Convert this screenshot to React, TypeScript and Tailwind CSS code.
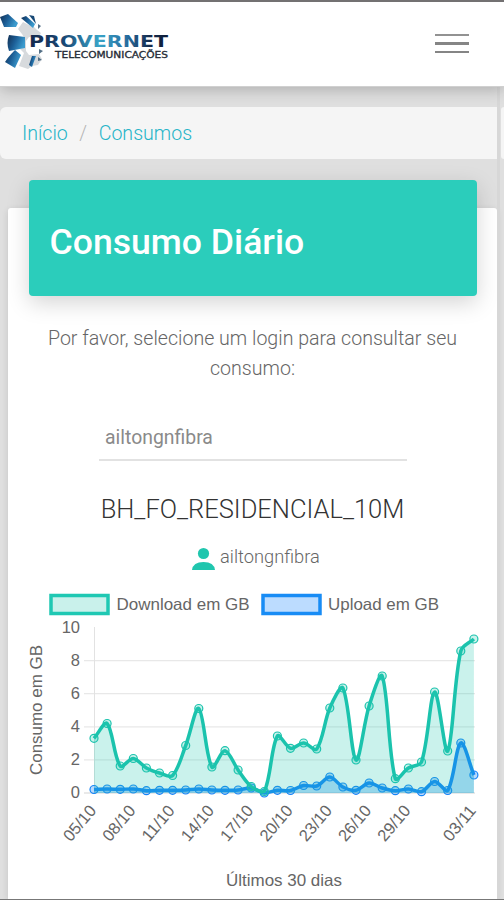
import React from "react";

const download = [738.3, 723.5, 766, 758.5, 768, 773, 775.5, 745.5, 708.5, 767, 750.7, 770, 786.5, 791.5, 736, 748.3, 743, 749, 708, 688, 760, 706, 676, 778.7, 768, 762, 692, 751, 651, 639];
const upload = [789.5, 789, 789.3, 789, 790.7, 790.3, 790.3, 790, 789, 790, 790.3, 790, 788, 793, 790.3, 790.5, 785.5, 786, 777, 787, 790.3, 783, 788, 790.7, 789, 791.7, 781.5, 790.5, 743, 775];

const CHART_TOP = 590;
const px = (i: number) => 94 + i * 13.1;

// Cardinal spline with the control points held inside the plot area.
function curve(values: number[]) {
  const p = values.map((v, i) => ({ x: px(i), y: v - CHART_TOP }));
  const clamp = (y: number) => Math.max(37, Math.min(203, y));
  const ctl = p.map((c, i) => {
    const a = p[Math.max(0, i - 1)];
    const b = p[Math.min(p.length - 1, i + 1)];
    const d1 = Math.hypot(c.x - a.x, c.y - a.y);
    const d2 = Math.hypot(b.x - c.x, b.y - c.y);
    const f1 = (0.32 * d1) / (d1 + d2);
    const f2 = (0.32 * d2) / (d1 + d2);
    return {
      px: c.x - f1 * (b.x - a.x),
      py: clamp(c.y - f1 * (b.y - a.y)),
      nx: c.x + f2 * (b.x - a.x),
      ny: clamp(c.y + f2 * (b.y - a.y)),
    };
  });
  let d = `M${p[0].x},${p[0].y}`;
  for (let i = 1; i < p.length; i++) {
    d += `C${ctl[i - 1].nx},${ctl[i - 1].ny} ${ctl[i].px},${ctl[i].py} ${p[i].x},${p[i].y}`;
  }
  return d;
}

function Series({ values, color, fill }: { values: number[]; color: string; fill: string }) {
  const d = curve(values);
  return (
    <g>
      <path d={`${d}V203H94Z`} fill={fill} />
      <path d={d} fill="none" stroke={color} strokeWidth="3.5" strokeLinejoin="round" />
      {values.map((v, i) => (
        <circle key={i} cx={px(i)} cy={v - CHART_TOP} r="4" fill={fill} stroke={color} strokeWidth="1.2" />
      ))}
    </g>
  );
}

const dates: [number, string][] = [[0, "05/10"], [3, "08/10"], [6, "11/10"], [9, "14/10"], [12, "17/10"], [15, "20/10"], [18, "23/10"], [21, "26/10"], [24, "29/10"], [29, "03/11"]];

function Chart() {
  return (
    <svg width="504" height="308" viewBox="0 0 504 308" className="-ml-2 block shrink-0 font-['Liberation_Sans',sans-serif]" fill="#666" fontSize="16.5">
      <rect x="51" y="5.5" width="57" height="18" fill="#c9f1eb" stroke="#1fc8b3" strokeWidth="3.5" />
      <text x="116.5" y="20" textLength="133" lengthAdjust="spacingAndGlyphs">Download em GB</text>
      <rect x="263" y="5.5" width="57" height="18" fill="#bcdcff" stroke="#188cf5" strokeWidth="3.5" />
      <text x="328" y="20" textLength="111" lengthAdjust="spacingAndGlyphs">Upload em GB</text>
      {[10, 8, 6, 4, 2, 0].map((n, i) => (
        <g key={n}>
          {n !== 10 && <line x1="84" x2="475" y1={37.5 + i * 33.1} y2={37.5 + i * 33.1} stroke={n === 0 ? "#d3d3d3" : "#e8e8e8"} strokeWidth="1.2" />}
          <text x="80" y={42.5 + i * 33.1} textAnchor="end">{n}</text>
        </g>
      ))}
      <line x1="94.5" x2="94.5" y1="37" y2="203" stroke="#e2e2e2" />
      <Series values={upload} color="#1484f8" fill="rgba(22,132,248,0.3)" />
      <Series values={download} color="#1bc3ad" fill="rgba(32,201,177,0.24)" />
      {dates.map(([i, label]) => (
        <text key={label} transform={`translate(${px(i) + 3},221) rotate(-50)`} textAnchor="end" textLength="41" lengthAdjust="spacingAndGlyphs" y="0">{label}</text>
      ))}
      <text transform="translate(42,185) rotate(-90)" textLength="130" lengthAdjust="spacingAndGlyphs">Consumo em GB</text>
      <text x="226" y="296" textLength="116" lengthAdjust="spacingAndGlyphs">Últimos 30 dias</text>
    </svg>
  );
}

function Logo() {
  return (
    <svg width="180" height="70" viewBox="0 10 180 70" className="block shrink-0">
      <defs>
        <linearGradient id="blade" x1="0" y1="0" x2="1" y2="0.4">
          <stop offset="0" stopColor="#122f52" />
          <stop offset="0.5" stopColor="#1c5e96" />
          <stop offset="1" stopColor="#3c9bce" />
        </linearGradient>
        <linearGradient id="word" gradientUnits="userSpaceOnUse" x1="29" y1="0" x2="169" y2="0">
          <stop offset="0" stopColor="#14294c" />
          <stop offset="0.25" stopColor="#194774" />
          <stop offset="0.5" stopColor="#39a4c8" />
          <stop offset="0.7" stopColor="#276d9f" />
          <stop offset="0.86" stopColor="#152b4c" />
          <stop offset="1" stopColor="#0c1c37" />
        </linearGradient>
      </defs>
      <path d="M18 29l5-7 6 3 5 2 3 3 4 3-3 5-9-1-3 4v10l3 4 10-1 3 5-4 6-6 1-4 3-9-3 5-13-4-4 5-2V39l-3-5z" fill="#d7dadd" />
      <path d="M0 17l8-3 10 9-2 4-12 0z" fill="url(#blade)" />
      <path d="M21 18l5-2 9 8-2 4z" fill="url(#blade)" />
      <path d="M29 15l5 1 2 8z" fill="#174875" />
      <path d="M9 35l16 2v11l-16 3q-3-8 0-16z" fill="url(#blade)" />
      <path d="M5 62q3-5 10-12l6 5-6 13z" fill="url(#blade)" />
      <path d="M32 56l4 0-4 11-3-2z" fill="url(#blade)" />
      <path d="M38 24l3 2-3 3zM39 49l4 2-4 3zM38 57l4 3-4 1z" fill="#536f86" />
      <text x="29" y="46.5" fontFamily="DejaVu Sans, sans-serif" fontWeight="700" fontSize="15.5" textLength="139" lengthAdjust="spacingAndGlyphs" fill="url(#word)">PROVERNET</text>
      <text x="55" y="58" fontFamily="DejaVu Sans, sans-serif" fontSize="8.5" textLength="113" lengthAdjust="spacingAndGlyphs" fill="#252b35" stroke="#252b35" strokeWidth=".3">TELECOMUNICAÇÕES</text>
    </svg>
  );
}

export default function App() {
  return (
    <div className="relative flex h-[900px] w-[504px] flex-col overflow-hidden bg-[#dfdfdf] font-[Roboto,sans-serif]">
      <header className="z-10 flex h-[87px] shrink-0 items-start justify-between border-t-2 border-b border-t-[#737172] border-b-[#d0d0d0] bg-white shadow-[0_3px_14px_rgba(0,0,0,0.22)]">
        <div className="pt-2"><Logo /></div>
        <div className="mt-[31.5px] mr-[35px] flex w-[34px] flex-col gap-[6px]">
          <span className="h-[2.5px] bg-[#929292]" />
          <span className="h-[2.5px] bg-[#858585]" />
          <span className="h-[2.5px] bg-[#858585]" />
        </div>
      </header>

      <nav className="mt-5 flex h-[52px] w-[497px] shrink-0 items-center rounded-l-md bg-[#f5f5f5] pt-[2px] pl-[22px] text-[19.6px] font-light text-[#26b4c8]">
        <span>Início</span>
        <span className="mx-[11.5px] text-[#b5b5b5]">/</span>
        <span>Consumos</span>
      </nav>

      <main className="mt-[49px] ml-2 flex h-[691px] w-[489px] shrink-0 flex-col rounded-t-[3px] bg-white shadow-[0_2px_7px_rgba(0,0,0,0.12)]">
        <div className="-mt-7 ml-[21px] flex h-[116px] w-[448px] shrink-0 items-center rounded-[4px] bg-[#2bcdbb] px-[20.5px] pt-[10px] shadow-[0_7px_22px_rgba(0,0,0,0.17)]">
          <h1 className="text-[35.6px] leading-none font-medium text-white">Consumo Diário</h1>
        </div>
        <p className="mt-7 h-[60px] text-center text-[19.6px] leading-[30px] font-light text-[#666]">
          Por favor, selecione um login para consultar seu<br />consumo:
        </p>
        <div className="mt-[34px] ml-[91px] flex h-[43px] w-[308px] items-center border-b-2 border-[#e2e2e2] pl-[6px] pb-[1px] text-[19.4px] text-[#8a8a8a]">ailtongnfibra</div>
        <h2 className="mt-[30px] h-[36px] text-center text-[25.5px] leading-[36px] font-light text-[#333]">BH_FO_RESIDENCIAL_10M</h2>
        <div className="mt-[15px] flex h-[30px] items-center pl-[184px] text-[18.3px] font-light text-[#666]">
          <svg width="23" height="24" viewBox="0 0 23 24" className="mr-[5px] mt-1 block" fill="#20c6ae">
            <circle cx="11.5" cy="6.5" r="5.6" />
            <path d="M0 23q1-8 11.5-8T23 23z" />
          </svg>
          <span>ailtongnfibra</span>
        </div>
        <div className="mt-[18px]"><Chart /></div>
      </main>
      <div className="absolute top-[87px] right-[4px] bottom-0 w-[3px] bg-[#d7d7d7]" />
      <div className="absolute top-[107px] right-0 h-[52px] w-[3px] rounded-l-sm bg-[#f5f5f5]" />
      <div className="absolute inset-x-0 bottom-0 h-[1.5px] bg-[#777]" />
    </div>
  );
}
